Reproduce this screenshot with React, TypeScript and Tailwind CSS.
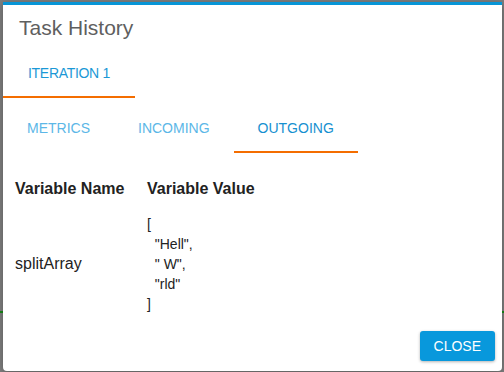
import React from "react";

const tabs = ["METRICS", "INCOMING", "OUTGOING"];
const active = "OUTGOING";

const value = `[
  "Hell",
  " W",
  "rld"
]`;

export default function App() {
  return (
    <div
      className="relative w-[504px] h-[372px] overflow-hidden bg-[#7f7f7f]"
      style={{ fontFamily: '"Liberation Sans", Arial, sans-serif' }}
    >
      {/* page behind the overlay */}
      <div className="pt-[311px]">
        <div className="h-[2px] bg-[#178a17]" />
      </div>

      {/* modal */}
      <div className="absolute left-[3px] top-[2px] w-[499px] h-[369px] flex flex-col bg-white border-t-[3px] border-[#0795d6] rounded-b-[4px] shadow-[0_2px_8px_rgba(0,0,0,0.3)]">
        <div className="h-[45px] flex items-center px-4">
          <h2 className="text-[21px] text-[#5f5f5f] leading-none">Task History</h2>
        </div>

        {/* iteration tabs */}
        <div className="flex">
          <div className="h-[48px] px-[25px] flex items-center border-b-2 border-[#f46d00] text-[14px] tracking-[-0.3px] text-[#1b98d6]">
            ITERATION 1
          </div>
        </div>

        {/* sub tabs */}
        <div className="flex mt-[7px]">
          {tabs.map((t) => (
            <div
              key={t}
              className={
                t === active
                  ? "h-[48px] px-6 flex items-center border-b-2 border-[#f46d00] text-[14px] text-[#1690d0]"
                  : "h-[48px] px-6 flex items-center border-b-2 border-transparent text-[14px] text-[#5cb7e7]"
              }
            >
              {t}
            </div>
          ))}
        </div>

        {/* variables table */}
        <div className="mt-[12px] text-[#222]">
          <div className="flex h-[48px] items-center text-[16px] font-bold">
            <div className="w-[144px] pl-3">Variable Name</div>
            <div>Variable Value</div>
          </div>
          <div className="flex items-center mt-px">
            <div className="w-[144px] pl-3 text-[16px]">splitArray</div>
            <pre
              className="text-[14px] leading-[20px] whitespace-pre"
              style={{ fontFamily: '"Liberation Sans", Arial, sans-serif' }}
            >
              {value}
            </pre>
          </div>
        </div>

        <div className="mt-auto flex justify-end pr-[7px] pb-[10px]">
          <button className="h-[30px] px-[14px] rounded-[3px] bg-[#0898dc] text-white text-[14px] shadow-[0_1px_3px_rgba(0,0,0,0.3)]">
            CLOSE
          </button>
        </div>
      </div>
    </div>
  );
}
